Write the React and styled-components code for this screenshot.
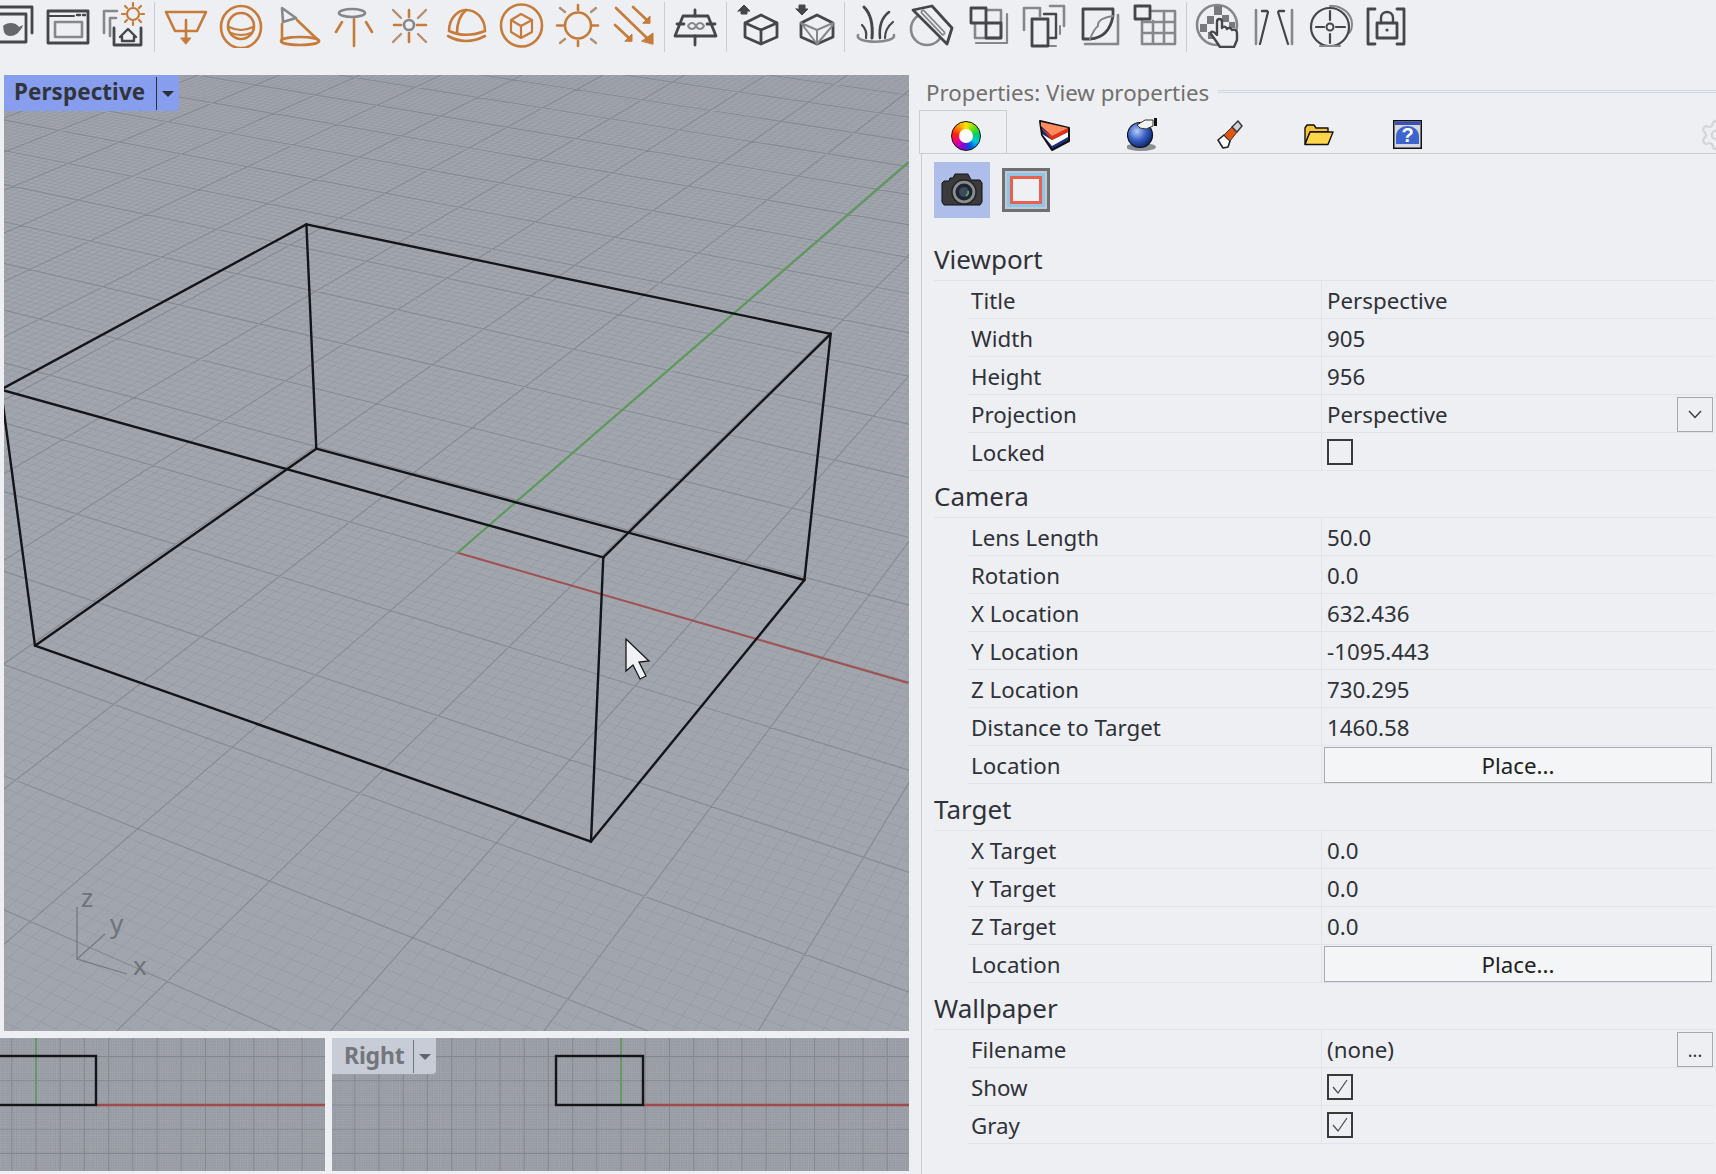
import React from 'react';
import styled, { createGlobalStyle } from 'styled-components';
import { Settings } from 'lucide-react';

const GlobalStyle = createGlobalStyle`
  html, body { margin: 0; padding: 0; background: #eeeff3; }
  body { font-family: "Noto Sans", "Open Sans", sans-serif; color: #2e3238; }
`;

const Page = styled.div`
  width: 1716px;
  height: 1174px;
  overflow: hidden;
  display: flex;
  flex-direction: column;
  background: #eeeff3;
`;

const Toolbar = styled.div`
  height: 75px;
  flex: none;
  display: flex;
  align-items: flex-start;
`;

const ToolSvg = styled.svg`
  flex: none;
  display: block;
  height: 48px;
  width: ${({ $w }) => $w}px;
  fill: none;
  stroke-linecap: round;
  stroke-linejoin: round;
`;

const ToolSep = styled.div`
  flex: none;
  width: 6px;
  height: 50px;
  margin-top: 2px;
  display: flex;
  justify-content: center;
  &::after {
    content: '';
    width: 1px;
    background: #c9ccd2;
  }
`;

const Main = styled.div`
  flex: 1;
  display: flex;
  min-height: 0;
`;

const ViewColumn = styled.div`
  width: 909px;
  flex: none;
  display: flex;
  flex-direction: column;
  gap: 7px;
`;

const BottomViews = styled.div`
  display: flex;
  gap: 7px;
  height: 133px;
`;

const Viewport = styled.div`
  position: relative;
  overflow: hidden;
  flex: none;
  background: #a1a5ad;
  width: ${({ $w }) => $w}px;
  height: ${({ $h }) => $h}px;
  margin-left: ${({ $inset }) => $inset || 0}px;
  svg.scene { display: block; }
`;

const ViewTab = styled.div`
  position: absolute;
  left: 0;
  top: 0;
  display: flex;
  align-items: stretch;
  border-bottom-right-radius: 4px;
  font-weight: 700;
  line-height: 32px;
  background: ${({ $active }) => ($active ? '#879eee' : '#c8ccd7')};
  color: ${({ $active }) => ($active ? '#32343c' : '#73767d')};
`;

const ViewName = styled.span`
  font-size: ${({ $active }) => ($active ? 22.4 : 23)}px;
  padding-left: ${({ $active }) => ($active ? 10 : 12)}px;
  padding-right: ${({ $active }) => ($active ? 11 : 9)}px;
  padding-top: 1px;
  height: 35px;
  letter-spacing: ${({ $active }) => ($active ? 0.1 : -0.2)}px;
`;

const ViewCaret = styled.span`
  width: 22px;
  margin: 2px 0 1px;
  border-left: 1px solid ${({ $active }) => ($active ? '#2c2f3a' : '#73767d')};
  display: flex;
  align-items: center;
  justify-content: center;
  &::after {
    content: '';
    border-left: 6px solid transparent;
    border-right: 6px solid transparent;
    border-top: 6px solid ${({ $active }) => ($active ? '#2c2f3a' : '#62656c')};
  }
`;

const Panel = styled.div`
  flex: 1;
  min-width: 0;
  margin-left: 10px;
  display: flex;
  flex-direction: column;
`;

const TitleBar = styled.div`
  height: 35px;
  flex: none;
  display: flex;
  align-items: center;
  gap: 9px;
  padding-left: 7px;
`;

const PanelTitle = styled.span`
  font-size: 22.3px;
  line-height: 35px;
  color: #72706f;
  white-space: nowrap;
`;

const TitleRule = styled.div`
  flex: 1;
  height: 1px;
  margin-top: -2px;
  border-top: 1px solid #cfd7e4;
  border-bottom: 1px solid #cfd7e4;
`;

const TabStrip = styled.div`
  height: 43px;
  flex: none;
  display: flex;
  border-bottom: 1px solid #c8ccd3;
  overflow: hidden;
`;

const Tab = styled.div`
  width: 88px;
  flex: none;
  box-sizing: border-box;
  display: flex;
  align-items: center;
  justify-content: center;
  padding-top: 6px;
  ${({ $active }) => ($active
    ? `
    border: 1px solid #c8ccd3;
    border-bottom: none;
    height: 44px;
    background: #eeeff3;
  `
    : 'padding-left: 8px;')}
`;

const ColorWheel = styled.div`
  width: 30px;
  height: 30px;
  margin-left: 6px;
  border-radius: 50%;
  box-sizing: border-box;
  border: 1.5px solid #111;
  background: conic-gradient(#ffe400, #7be000, #00d060, #00c8e0, #0050e0, #9000d0, #f00090, #ff2000, #ff9000, #ffe400);
  display: flex;
  align-items: center;
  justify-content: center;
  &::after {
    content: '';
    width: 14px;
    height: 14px;
    border-radius: 50%;
    background: #fff;
  }
`;

const TabGear = styled.div`
  margin-left: auto;
  margin-right: -17px;
  padding-top: 6px;
  color: #d2d5da;
  display: flex;
  align-items: center;
`;

const PanelBody = styled.div`
  flex: 1;
  margin-left: 2px;
  border-left: 1px solid #c8ccd3;
  padding: 8px 2px 0 12px;
`;

const ModeRow = styled.div`
  height: 72px;
  display: flex;
  align-items: flex-start;
  gap: 12px;
`;

const ModeButton = styled.div`
  width: 56px;
  height: 56px;
  display: flex;
  align-items: center;
  justify-content: center;
  background: #aebde9;
`;

const FrameIcon = styled.div`
  width: 48px;
  height: 44px;
  margin-top: 6px;
  box-sizing: border-box;
  border: 3px solid #6d6f72;
  background: #c2c8d0;
  padding: 2px;
  display: flex;
  &::after {
    content: '';
    flex: 1;
    background: #eef0f3;
    border: 3px solid #e8604f;
    outline: 3px solid #8dc6e8;
    margin: 3px;
  }
`;

const SectionTitle = styled.div`
  height: 46px;
  box-sizing: content-box;
  border-bottom: 1px solid #e1e3e9;
  font-size: 26px;
  line-height: 50px;
  color: #2e3238;
`;

const Row = styled.div`
  height: 37px;
  margin-left: 33px;
  display: flex;
  border-bottom: 1px solid #e1e3e9;
  font-size: 22.3px;
  line-height: 40px;
`;

const RowLabel = styled.div`
  width: 355px;
  flex: none;
  padding-left: 4px;
  box-sizing: border-box;
  border-right: 1px solid #e1e3e9;
`;

const RowValue = styled.div`
  flex: 1;
  min-width: 0;
  display: flex;
  align-items: flex-start;
  padding-left: ${({ $flush }) => ($flush ? 2 : 5)}px;
`;

const PlaceButton = styled.div`
  flex: 1;
  height: 36px;
  margin: 1px 2px 0 0;
  box-sizing: border-box;
  border: 1px solid #a8a9ac;
  background: #f4f5f7;
  text-align: center;
  line-height: 35px;
  color: #222;
`;

const SideButton = styled.div`
  margin-left: auto;
  margin-right: 1px;
  margin-top: 2px;
  width: 36px;
  height: 35px;
  box-sizing: border-box;
  border: 1px solid #a8a9ac;
  display: flex;
  align-items: center;
  justify-content: center;
  font-size: 18px;
  color: #333;
  svg { display: block; }
`;

const CheckBox = styled.div`
  width: 26px;
  height: 26px;
  margin: 6px 0 0 0;
  box-sizing: border-box;
  border: 2px solid #3a3a3a;
  display: flex;
  align-items: center;
  justify-content: center;
`;

/* ---------- perspective scene ---------- */

const VW = 905;
const VH = 956;
const toView = ([x, y]) => [x - 4, y - 75];

// quad of the box floor, on the page
const quad = [[35, 646], [591, 842], [804.4, 580], [316.3, 449]].map(toView);
const origin = toView([457.5, 552.7]);

function makeHomography([p0, p1, p2, p3]) {
  const dx1 = p1[0] - p2[0];
  const dx2 = p3[0] - p2[0];
  const sx = p0[0] - p1[0] + p2[0] - p3[0];
  const dy1 = p1[1] - p2[1];
  const dy2 = p3[1] - p2[1];
  const sy = p0[1] - p1[1] + p2[1] - p3[1];
  const det = dx1 * dy2 - dx2 * dy1;
  const g = (sx * dy2 - dx2 * sy) / det;
  const h = (dx1 * sy - sx * dy1) / det;
  return {
    a: p1[0] - p0[0] + g * p1[0],
    b: p3[0] - p0[0] + h * p3[0],
    c: p0[0],
    d: p1[1] - p0[1] + g * p1[1],
    e: p3[1] - p0[1] + h * p3[1],
    f: p0[1],
    g,
    h,
  };
}

const H = makeHomography(quad);

function project(u, v) {
  const w = H.g * u + H.h * v + 1;
  return [(H.a * u + H.b * v + H.c) / w, (H.d * u + H.e * v + H.f) / w];
}

function unproject([X, Y]) {
  const m11 = H.a - H.g * X;
  const m12 = H.b - H.h * X;
  const m21 = H.d - H.g * Y;
  const m22 = H.e - H.h * Y;
  const r1 = X - H.c;
  const r2 = Y - H.f;
  const det = m11 * m22 - m12 * m21;
  return [(r1 * m22 - m12 * r2) / det, (m11 * r2 - r1 * m21) / det];
}

const [u0, v0] = unproject(origin);
const du = (1 - u0) / 2.5;
const dv = 1 / 3.66;
const REACH = 70;
const MIN_W = 0.12;

function segment(fixedIsU, t) {
  let lo = (fixedIsU ? v0 : u0) - REACH * (fixedIsU ? dv : du);
  let hi = (fixedIsU ? v0 : u0) + REACH * (fixedIsU ? dv : du);
  const k = fixedIsU ? H.h : H.g;
  const base = (fixedIsU ? H.g : H.h) * t + 1;
  // keep the segment in front of the camera
  if (k !== 0) {
    const limit = (MIN_W - base) / k;
    if (k > 0) lo = Math.max(lo, limit);
    else hi = Math.min(hi, limit);
  }
  if (lo >= hi) return '';
  const a = fixedIsU ? project(t, lo) : project(lo, t);
  const b = fixedIsU ? project(t, hi) : project(hi, t);
  if (Math.max(a[0], b[0]) < 0 || Math.min(a[0], b[0]) > VW) return '';
  if (Math.max(a[1], b[1]) < 0 || Math.min(a[1], b[1]) > VH) return '';
  return `M${a[0].toFixed(1)} ${a[1].toFixed(1)}L${b[0].toFixed(1)} ${b[1].toFixed(1)}`;
}

function gridPaths() {
  let minor = '';
  let major = '';
  for (let i = -REACH * 10; i <= REACH * 10; i += 1) {
    const su = segment(true, u0 + (i / 10) * du);
    const sv = segment(false, v0 + (i / 10) * dv);
    if (i % 10 === 0) major += su + sv;
    else minor += su + sv;
  }
  return { minor, major };
}

const grid = gridPaths();

const boxEdges = [
  [[306.4, 224.4], [830.7, 333.8]],
  [[830.7, 333.8], [603.3, 557.3]],
  [[603.3, 557.3], [1, 389.6]],
  [[1, 389.6], [306.4, 224.4]],
  [[316.3, 448.7], [804.4, 580]],
  [[804.4, 580], [591, 841.6]],
  [[591, 841.6], [35, 645.7]],
  [[35, 645.7], [316.3, 448.7]],
  [[306.4, 224.4], [316.3, 448.7]],
  [[830.7, 333.8], [804.4, 580]],
  [[603.3, 557.3], [591, 841.6]],
  [[1, 389.6], [35, 645.7]],
];

const PerspectiveScene = () => {
  const o = origin;
  const red = toView([908.4, 683]);
  const green = toView([908.4, 162]);
  return (
    <svg className="scene" width={VW} height={VH} viewBox={`0 0 ${VW} ${VH}`}>
      <path d={grid.minor} stroke="#8e9299" strokeOpacity="0.42" strokeWidth="1" fill="none" />
      <path d={grid.major} stroke="#7f838b" strokeOpacity="0.8" strokeWidth="1.1" fill="none" />
      <line x1={o[0]} y1={o[1]} x2={red[0]} y2={red[1]} stroke="#a25152" strokeWidth="2" />
      <line x1={o[0]} y1={o[1]} x2={green[0]} y2={green[1]} stroke="#5a9b58" strokeWidth="2" />
      {boxEdges.map(([p, q], i) => {
        const a = toView(p);
        const b = toView(q);
        return <line key={i} x1={a[0]} y1={a[1]} x2={b[0]} y2={b[1]} stroke="#14151a" strokeWidth="2.4" strokeLinecap="round" />;
      })}
      <g stroke="#757981" strokeWidth="1.3" fill="none">
        <path d="M73 832V884L123 899" />
        <path d="M73 884L101 859" />
      </g>
      <g fill="#6f737a" fontFamily="Noto Sans, sans-serif" fontSize="26">
        <text x="77" y="832">z</text>
        <text x="106" y="858">y</text>
        <text x="129" y="900">x</text>
      </g>
      <path
        d="M622 564V596L629 590L636 604L642 601L635 587L645 586Z"
        fill="#eff1f5"
        stroke="#17181c"
        strokeWidth="1.3"
        strokeLinejoin="miter"
      />
    </svg>
  );
};

function orthoLines(width, height, ox, oy) {
  let minor = '';
  let major = '';
  const step = 2.42;
  for (let i = -400; i <= 400; i += 1) {
    const x = ox + i * step;
    const y = oy + i * step;
    if (x >= 0 && x <= width) {
      const s = `M${x.toFixed(1)} 0V${height}`;
      if (i % 10 === 0) major += s;
      else minor += s;
    }
    if (y >= 0 && y <= height) {
      const s = `M0 ${y.toFixed(1)}H${width}`;
      if (i % 10 === 0) major += s;
      else minor += s;
    }
  }
  return { minor, major };
}

const OrthoScene = ({ width, ox, boxLeft, boxRight }) => {
  const height = 133;
  const groundY = 67;
  const topY = 18;
  const lines = orthoLines(width, height, ox, groundY);
  return (
    <svg className="scene" width={width} height={height} viewBox={`0 0 ${width} ${height}`}>
      <path d={lines.minor} stroke="#8e9299" strokeOpacity="0.4" strokeWidth="1" fill="none" />
      <path d={lines.major} stroke="#83878f" strokeWidth="1.1" fill="none" />
      <line x1={ox} y1="0" x2={ox} y2={groundY} stroke="#5a9b58" strokeWidth="1.6" />
      <line x1={boxRight} y1={groundY} x2={width} y2={groundY} stroke="#9f4b4e" strokeWidth="2.4" />
      <rect x={boxLeft} y={topY} width={boxRight - boxLeft} height={groundY - topY} fill="none" stroke="#14151a" strokeWidth="2.4" />
    </svg>
  );
};

/* ---------- toolbar icons, drawn in page coordinates ---------- */

const OR = { stroke: '#c67b3a', strokeWidth: 2.6 };
const ORG = { stroke: '#b58f6f', strokeWidth: 2.4 };
const DK = { stroke: '#454649', strokeWidth: 2.8 };
const GR = { stroke: '#85878b', strokeWidth: 2.6 };

const Tool = ({ at, w = 56, children }) => (
  <ToolSvg $w={w} viewBox={`${at} 0 ${w} 48`}>
    {children}
  </ToolSvg>
);

const TOOL_GROUP_A = (
  <>
    <Tool at={0} w={39}>
      <path d="M0 7H32V33" {...DK} />
      <path d="M0 14H26V42H0" {...DK} />
      <path d="M3 26C7 22 16 22 19 27L23 25C22 29 20 30 18 33C13 37 6 37 4 32Z" fill="#66676a" />
    </Tool>
    <Tool at={39}>
      <rect x="48" y="11" width="40" height="32" {...DK} />
      <path d="M48 16H74" {...DK} strokeWidth="2" />
      <path d="M77 15H80M83 15H85" {...DK} strokeWidth="2.4" />
      <rect x="55" y="22" width="27" height="15" {...GR} />
    </Tool>
    <Tool at={95}>
      <path d="M104 33V11H117" {...GR} />
      <path d="M110 36V18H116" {...GR} />
      <path d="M114 28V45H141V28" {...DK} />
      <path d="M120 37L128 29L136 37M122 36V41H134V36" {...DK} strokeWidth="2.4" />
      <circle cx="133" cy="14" r="6" {...OR} strokeWidth="2.2" />
      <path d="M133 3V6M133 22V25M122 14H125M141 14H144M125 6L127 8M141 6L139 8M125 22L127 20M141 22L139 20" {...OR} strokeWidth="2.2" />
    </Tool>
  </>
);

const TOOL_GROUP_B = (
  <>
    <Tool at={157}>
      <path d="M166 12H206L197 31H175Z" {...OR} />
      <path d="M186 20V38" {...OR} />
      <path d="M181 38H191L186 44Z" fill="#c67b3a" {...OR} strokeWidth="1" />
    </Tool>
    <Tool at={213}>
      <ellipse cx="241" cy="27" rx="20" ry="21" {...OR} />
      <circle cx="241" cy="26" r="13" {...OR} />
      <path d="M229 27Q241 33 253 27M231 33Q241 37 251 33" {...OR} strokeWidth="2" />
    </Tool>
    <Tool at={269}>
      <path d="M282 8L296 18L283 22Z" {...GR} />
      <path d="M297 20L319 41M282 24V42" {...OR} />
      <ellipse cx="300" cy="41" rx="19" ry="4" {...OR} />
    </Tool>
    <Tool at={325}>
      <ellipse cx="352" cy="13" rx="13" ry="4" {...GR} />
      <path d="M354 19V46M342 22L336 32M366 22L372 32" {...OR} />
    </Tool>
    <Tool at={381}>
      <circle cx="409" cy="25" r="5" {...GR} />
      <path d="M409 10V17M409 33V42M394 25H401M417 25H426" {...OR} />
      <path d="M393 10L401 18M426 10L418 18M393 42L401 34M426 42L418 34" {...ORG} />
    </Tool>
    <Tool at={437}>
      <path d="M449 31C449 18 458 10 466 10C476 10 485 18 485 31C472 36 460 36 449 31Z" {...OR} />
      <path d="M466 10C459 16 457 25 457 33" {...OR} />
      <path d="M448 36Q466 46 485 36" {...OR} />
    </Tool>
    <Tool at={493}>
      <ellipse cx="521.5" cy="25.5" rx="20.5" ry="21" {...OR} />
      <path d="M521 14L532 20V32L521 38L511 32V20ZM511 20L521 26L532 20M521 26V38" {...OR} strokeWidth="2.2" />
    </Tool>
    <Tool at={549}>
      <circle cx="578" cy="25.5" r="13" {...OR} />
      <path d="M578 5V10M578 41V46M557 25.5H563M592 25.5H598" {...OR} />
      <path d="M560 8L565 12M596 8L591 12M560 43L565 39M596 43L591 39" {...ORG} />
    </Tool>
    <Tool at={605}>
      <path d="M616 8L650 41M633 7L648 21M615 25L630 39" {...OR} />
      <path d="M642 41L653 33L653 44Z" fill="#c67b3a" {...OR} strokeWidth="1" />
      <path d="M643 23L650 16V23Z" fill="#c67b3a" {...OR} strokeWidth="1" />
      <path d="M625 41L632 34V41Z" fill="#c67b3a" {...OR} strokeWidth="1" />
    </Tool>
  </>
);

const TOOL_GROUP_C = (
  <Tool at={667}>
    <path d="M683 16H708L716 36H675Z" {...DK} />
    <path d="M695 10V16M695 36V45M677 24H684M707 24H715" {...DK} />
    <path d="M688 26C690 22 694 22 696 26C698 30 702 30 704 26C702 22 698 22 696 26C694 30 690 30 688 26Z" {...GR} strokeWidth="2" />
  </Tool>
);

const TOOL_GROUP_D = (
  <>
    <Tool at={729}>
      <path d="M761 15L777 23V37L761 44L745 37V23ZM745 23L761 30L777 23M761 30V44" {...DK} />
      <path d="M738 11L744 5L750 11H747V14H741V11Z" fill="#454649" stroke="#454649" strokeWidth="1" />
    </Tool>
    <Tool at={785}>
      <path d="M817 15L833 23V37L817 44L801 37V23Z" {...DK} />
      <path d="M801 23L817 30L833 23M817 30V44M801 23L817 44M833 25L817 44" {...GR} strokeWidth="2" />
      <path d="M796 9L802 15L808 9H805V5H799V9Z" fill="#454649" stroke="#454649" strokeWidth="1" />
    </Tool>
  </>
);

const TOOL_GROUP_E = (
  <>
    <Tool at={847}>
      <path d="M858 35C854 44 896 44 894 35" {...GR} />
      <path d="M872 38C873 26 871 14 864 7" {...DK} strokeWidth="3" />
      <path d="M880 38C879 28 881 18 889 12" {...DK} strokeWidth="2.6" />
      <path d="M866 38C867 33 866 29 862 25" {...DK} strokeWidth="2.2" />
      <path d="M885 38C885 32 888 26 893 22" {...DK} strokeWidth="2.2" />
    </Tool>
    <Tool at={903}>
      <circle cx="927" cy="29" r="16" {...GR} />
      <path d="M913 10L932 6L952 28L947 44Z" fill="#eeeff3" {...DK} />
      <path d="M923 12L943 33" stroke="#85878b" strokeWidth="5" />
      <path d="M923 12L943 33" stroke="#eeeff3" strokeWidth="1.6" />
    </Tool>
    <Tool at={959}>
      <path d="M986 10H1001V38H986M975 23V38H986" {...GR} />
      <path d="M1007 14V43H976" {...GR} strokeWidth="2.2" />
      <rect x="971" y="8" width="15" height="15" {...DK} />
      <rect x="986" y="23" width="15" height="15" {...DK} />
    </Tool>
    <Tool at={1015}>
      <path d="M1024 30V8H1040V16M1050 6H1064V26" {...GR} />
      <path d="M1044 14H1056V38H1050" {...DK} strokeWidth="2.4" />
      <path d="M1048 46H1056M1060 26V34" {...GR} strokeWidth="2" />
      <rect x="1032" y="19" width="16" height="27" {...DK} />
    </Tool>
    <Tool at={1071}>
      <path d="M1118 15V44H1085" {...GR} />
      <path d="M1083 9H1113V16C1111 27 1105 38 1090 39H1083Z" {...DK} />
      <path d="M1113 16C1105 17 1097 20 1098 26C1094 29 1092 34 1090 39" {...GR} strokeWidth="2" />
    </Tool>
    <Tool at={1127}>
      <path d="M1152 11H1175V44H1142V21M1164 11V44M1153 21V44M1142 22H1175M1142 33H1175" {...GR} />
      <rect x="1135" y="6" width="15" height="13" {...DK} />
    </Tool>
  </>
);

const TOOL_GROUP_F = (
  <>
    <Tool at={1189}>
      <circle cx="1217" cy="25" r="20" {...GR} />
      <path d="M1200 24h7v8h-7zM1207 16h7v8h-7zM1214 6h8v9h-8zM1222 15h7v7h-7zM1208 32h6v7h-6zM1229 22h6v6h-6z" fill="#77797d" />
      <path
        d="M1216 41L1211 34C1210 31 1213 31 1215 33L1217 35V22C1217 18 1222 18 1222 22V28C1223 26 1226 26 1227 29C1229 27 1231 28 1232 30C1234 29 1237 30 1237 33V40L1234 47H1220Z"
        fill="#eeeff3"
        {...DK}
        strokeWidth="2.4"
      />
    </Tool>
    <Tool at={1245}>
      <path d="M1256 10V44M1292 10V44" {...GR} />
      <path d="M1268 12L1260 44M1278 12L1288 44" {...DK} strokeWidth="2.2" />
      <path d="M1262 11H1267M1279 11H1284" {...DK} strokeWidth="2.4" />
    </Tool>
    <Tool at={1301}>
      <path d="M1330 6C1342 5 1352 14 1352 24C1352 28 1351 31 1349 33" {...GR} strokeWidth="2" />
      <circle cx="1330" cy="27" r="19" {...DK} strokeWidth="2.2" />
      <circle cx="1330" cy="27" r="3.5" {...DK} strokeWidth="2" />
      <path d="M1330 11V20M1330 34V43M1316 27H1324M1336 27H1345" {...DK} strokeWidth="2.2" />
      <path d="M1320 46H1340" {...GR} strokeWidth="2" />
    </Tool>
    <Tool at={1357}>
      <path d="M1375 9H1368V44H1375M1397 9H1404V44H1397" {...DK} />
      <rect x="1377" y="23" width="20" height="15" {...DK} />
      <path d="M1381 23V18C1381 10 1393 10 1393 18V23" {...DK} strokeWidth="2.4" />
      <circle cx="1387" cy="30" r="1.6" fill="#454649" />
    </Tool>
  </>
);

/* ---------- panel icons ---------- */

const LayerIcon = () => (
  <svg width="32" height="32" viewBox="0 0 32 32">
    <path d="M1 2L30 9V22L13 31L3 16Z" fill="#1d2f7f" stroke="#111" strokeWidth="2" strokeLinejoin="round" />
    <path d="M3 15L13 27L29 18V13L13 21Z" fill="#fff" />
    <path d="M2 9L13 21L29 13V9L13 17Z" fill="#e8300e" />
    <path d="M2 3L29 9L13 17L2 7Z" fill="#ff8a5c" />
  </svg>
);

const GlobeIcon = () => (
  <svg width="32" height="34" viewBox="0 0 32 34">
    <defs>
      <radialGradient id="globeFill" cx="38%" cy="35%" r="70%">
        <stop offset="0%" stopColor="#b8cdf5" />
        <stop offset="50%" stopColor="#3b62c8" />
        <stop offset="100%" stopColor="#0d2168" />
      </radialGradient>
    </defs>
    <ellipse cx="14" cy="29" rx="15" ry="4" fill="#8b8e93" />
    <circle cx="13" cy="17" r="12.5" fill="url(#globeFill)" stroke="#111" strokeWidth="1.2" />
    <path d="M10 7L18 2H26V8L19 11L13 10Z" fill="#f3f3f3" stroke="#333" strokeWidth="1" />
    <path d="M27 0H30V8H27Z" fill="#111" />
  </svg>
);

const TubeIcon = () => (
  <svg width="28" height="30" viewBox="0 0 28 30">
    <path d="M1 20L6 28L11 27L13 21L7 15Z" fill="#fff" stroke="#222" strokeWidth="1.6" strokeLinejoin="round" />
    <path d="M7 15L13 21L20 12L15 7Z" fill="#e2570f" stroke="#333" strokeWidth="1" />
    <path d="M15 7L20 12L25 6L21 1Z" fill="#cfd2d6" stroke="#333" strokeWidth="1.4" />
  </svg>
);

const FolderIcon = () => (
  <svg width="30" height="22" viewBox="0 0 30 22">
    <path d="M1 20V4L3 1H10L12 4H24V8H6Z" fill="#f6c53a" stroke="#111" strokeWidth="1.4" strokeLinejoin="round" />
    <path d="M1 20.5L6 8H29L24 20.5Z" fill="#ffd54a" stroke="#111" strokeWidth="1.4" strokeLinejoin="round" />
  </svg>
);

const HelpIcon = () => (
  <svg width="29" height="29" viewBox="0 0 29 29">
    <rect x="0.75" y="0.75" width="27.5" height="27.5" fill="#d5d8de" stroke="#111" strokeWidth="1.5" />
    <rect x="1.5" y="1.5" width="26" height="3.5" fill="#3f4fb0" />
    <path d="M3 24V17C3 10 8 6 14.5 6C21 6 26 10 26 17V24Z" fill="#3d63cf" />
    <text x="14.5" y="22" textAnchor="middle" fontFamily="Liberation Sans, sans-serif" fontWeight="700" fontSize="20" fill="#fff">?</text>
  </svg>
);

const CameraIcon = () => (
  <svg width="42" height="34" viewBox="0 0 42 34">
    <path d="M1 10L3 8H8L9 5H12L14 1H27L30 7H39L41 10V29L39 32H3L1 29Z" fill="#3b3b3e" stroke="#111" strokeWidth="1" />
    <circle cx="23" cy="19" r="12" fill="#8b8d90" stroke="#222" strokeWidth="1.5" />
    <circle cx="23" cy="19" r="8.5" fill="#1e2430" />
    <circle cx="23" cy="19" r="5" fill="#3c4a5d" />
    <path d="M25 23Q28 21 27 18" stroke="#62c06a" strokeWidth="1.4" fill="none" />
  </svg>
);

const Chevron = () => (
  <svg width="14" height="9" viewBox="0 0 14 9">
    <path d="M1 1L7 7.5L13 1" fill="none" stroke="#3a3a3a" strokeWidth="1.4" />
  </svg>
);

const Tick = () => (
  <svg width="18" height="18" viewBox="0 0 18 18">
    <path d="M2 9L7 15L16 2" fill="none" stroke="#4a4a4a" strokeWidth="1.2" />
  </svg>
);

/* ---------- properties data ---------- */

const sections = [
  {
    title: 'Viewport',
    rows: [
      { label: 'Title', value: 'Perspective' },
      { label: 'Width', value: '905' },
      { label: 'Height', value: '956' },
      { label: 'Projection', value: 'Perspective', side: 'chevron' },
      { label: 'Locked', check: false },
    ],
  },
  {
    title: 'Camera',
    rows: [
      { label: 'Lens Length', value: '50.0' },
      { label: 'Rotation', value: '0.0' },
      { label: 'X Location', value: '632.436' },
      { label: 'Y Location', value: '-1095.443' },
      { label: 'Z Location', value: '730.295' },
      { label: 'Distance to Target', value: '1460.58' },
      { label: 'Location', button: 'Place...' },
    ],
  },
  {
    title: 'Target',
    rows: [
      { label: 'X Target', value: '0.0' },
      { label: 'Y Target', value: '0.0' },
      { label: 'Z Target', value: '0.0' },
      { label: 'Location', button: 'Place...' },
    ],
  },
  {
    title: 'Wallpaper',
    rows: [
      { label: 'Filename', value: '(none)', side: 'dots' },
      { label: 'Show', check: true },
      { label: 'Gray', check: true },
    ],
  },
];

const PropertyRow = ({ row }) => (
  <Row>
    <RowLabel>{row.label}</RowLabel>
    <RowValue $flush={row.button}>
      {row.value}
      {row.button && <PlaceButton>{row.button}</PlaceButton>}
      {row.check !== undefined && <CheckBox>{row.check && <Tick />}</CheckBox>}
      {row.side && <SideButton>{row.side === 'chevron' ? <Chevron /> : '...'}</SideButton>}
    </RowValue>
  </Row>
);

export default function App() {
  return (
    <Page>
      <GlobalStyle />
      <Toolbar>
        {TOOL_GROUP_A}
        <ToolSep />
        {TOOL_GROUP_B}
        <ToolSep />
        {TOOL_GROUP_C}
        <ToolSep />
        {TOOL_GROUP_D}
        <ToolSep />
        {TOOL_GROUP_E}
        <ToolSep />
        {TOOL_GROUP_F}
      </Toolbar>
      <Main>
        <ViewColumn>
          <Viewport $w={905} $h={956} $inset={4}>
            <PerspectiveScene />
            <ViewTab $active>
              <ViewName $active>Perspective</ViewName>
              <ViewCaret $active />
            </ViewTab>
          </Viewport>
          <BottomViews>
            <Viewport $w={325} $h={133}>
              <OrthoScene width={325} ox={36} boxLeft={-60} boxRight={96} />
            </Viewport>
            <Viewport $w={577} $h={133}>
              <OrthoScene width={577} ox={289} boxLeft={224} boxRight={311} />
              <ViewTab>
                <ViewName>Right</ViewName>
                <ViewCaret />
              </ViewTab>
            </Viewport>
          </BottomViews>
        </ViewColumn>
        <Panel>
          <TitleBar>
            <PanelTitle>Properties: View properties</PanelTitle>
            <TitleRule />
          </TitleBar>
          <TabStrip>
            <Tab $active><ColorWheel /></Tab>
            <Tab><LayerIcon /></Tab>
            <Tab><GlobeIcon /></Tab>
            <Tab><TubeIcon /></Tab>
            <Tab><FolderIcon /></Tab>
            <Tab><HelpIcon /></Tab>
            <TabGear><Settings size={34} strokeWidth={1.6} /></TabGear>
          </TabStrip>
          <PanelBody>
            <ModeRow>
              <ModeButton><CameraIcon /></ModeButton>
              <FrameIcon />
            </ModeRow>
            {sections.map(section => (
              <div key={section.title}>
                <SectionTitle>{section.title}</SectionTitle>
                {section.rows.map(row => (
                  <PropertyRow key={row.label} row={row} />
                ))}
              </div>
            ))}
          </PanelBody>
        </Panel>
      </Main>
    </Page>
  );
}
